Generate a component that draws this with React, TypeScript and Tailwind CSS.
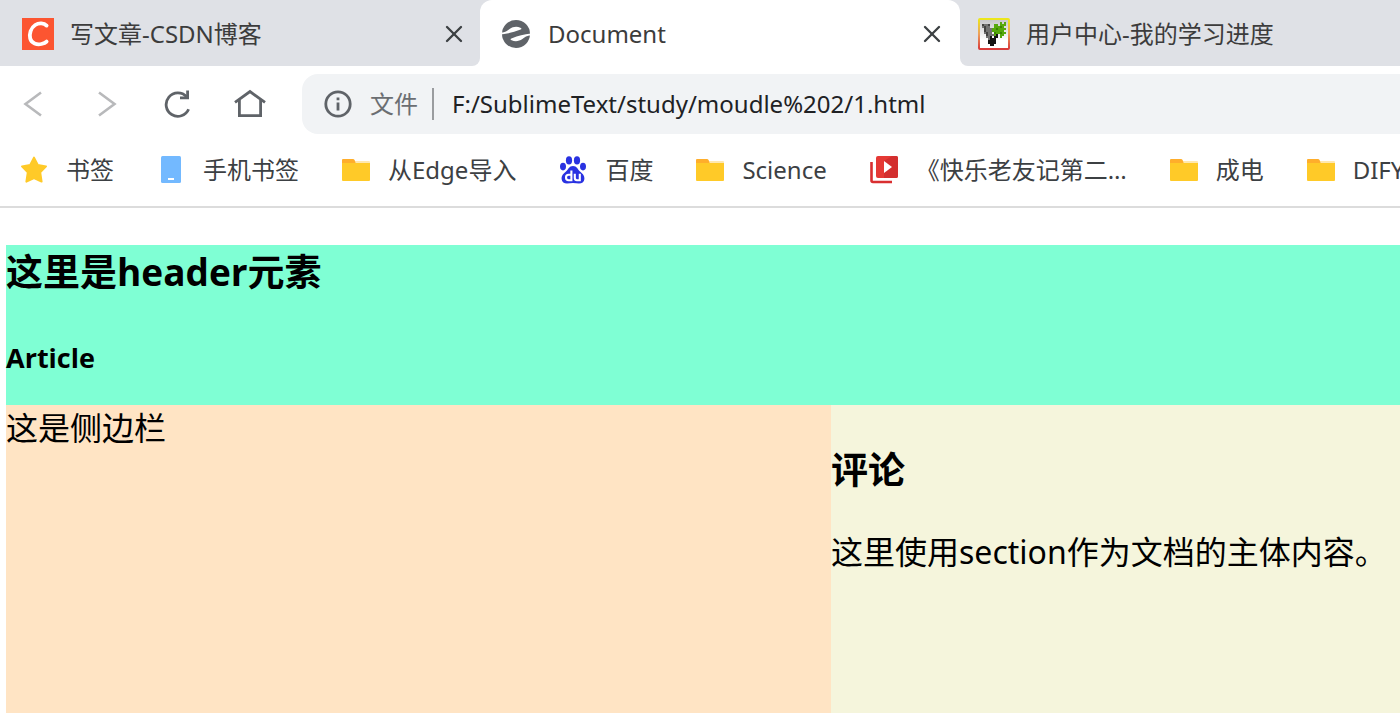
import type { ReactNode } from 'react';
import { X } from 'lucide-react';

function CsdnIcon() {
  return (
    <svg viewBox="0 0 32 32" className="size-8 shrink-0" aria-hidden="true">
      <rect width="32" height="32" fill="#fc5531" />
      <path
        d="M24.6 7.6C22 5 17 4.6 13.2 7C8.8 9.8 7 16 8.2 20.6C9.4 25.4 15 27 19.4 26C21.4 25.5 23.4 24.8 24.6 23.6"
        fill="none"
        stroke="#fff"
        strokeWidth="3.8"
        strokeLinecap="round"
      />
    </svg>
  );
}

function DocumentIcon() {
  return (
    <svg viewBox="0 0 32 32" className="size-8 shrink-0" aria-hidden="true">
      <circle cx="16" cy="16" r="14" fill="#5f6368" />
      <path d="M1 14.8C5 14.4 7.4 12.8 9.6 11C13 8.6 17 8.2 20.4 9.8C21.8 10.6 22 11 20 11.8C14 14.2 8 15.6 1 16.4Z" fill="#fff" />
      <path d="M31 17.2C27 17.6 24.6 19.2 22.4 21C19 23.4 15 23.8 11.6 22.2C10.2 21.4 10 21 12 20.2C18 17.8 24 16.4 31 15.6Z" fill="#fff" />
    </svg>
  );
}

function PlantIcon() {
  return (
    <svg viewBox="0 0 32 32" className="size-8 shrink-0" aria-hidden="true">
      <defs>
        <linearGradient id="frame" x1="0" y1="0" x2="0" y2="1">
          <stop offset="0" stopColor="#ece71c" />
          <stop offset="0.5" stopColor="#eda05c" />
          <stop offset="1" stopColor="#d93a3a" />
        </linearGradient>
        <linearGradient id="ground" x1="0" y1="0" x2="0" y2="1">
          <stop offset="0" stopColor="#c4c4c8" />
          <stop offset="0.7" stopColor="#fff" />
        </linearGradient>
      </defs>
      <rect x="1" y="1" width="30" height="30" rx="1" fill="url(#ground)" stroke="url(#frame)" strokeWidth="2" />
      <path d="M4 6H12V10H14V16H16V18H12V22H10V20H8V16H6V10H4Z" fill="#737373" />
      <path d="M4 6H6V8H4ZM6 8H8V14H10V18H8V14H6ZM10 6H12V8H10Z" fill="#424242" />
      <path d="M12 18H14V20H16V16H20V20H18V26H16V28H12V26H10V22H12Z" fill="#151515" />
      <path d="M14 10H16V6H20V8H22V4H24V6H26V4H28V8H26V10H28V12H26V14H28V16H26V18H24V20H22V16H18V18H16V14H14Z" fill="#55a80c" />
      <path d="M18 10H20V12H18ZM22 8H24V10H22ZM22 14H24V16H22ZM16 14H18V16H16Z" fill="#3b8500" />
    </svg>
  );
}

function StarIcon() {
  return (
    <svg viewBox="0 0 28 28" className="size-7 shrink-0" aria-hidden="true">
      <path
        d="M14 1.6L17.8 9L26 10.4L20.2 16.4L21.6 25.6L14 22L6.4 25.6L7.8 16.4L2 10.4L10.2 9Z"
        fill="#ffca28"
        stroke="#ffca28"
        strokeWidth="2"
        strokeLinejoin="round"
      />
    </svg>
  );
}

function PhoneIcon() {
  return (
    <svg viewBox="0 0 28 28" className="size-7 shrink-0" aria-hidden="true">
      <rect x="4" y="0" width="20" height="27" rx="1.5" fill="#73b9ff" />
      <rect x="11" y="22" width="6" height="2" fill="#fff" />
    </svg>
  );
}

function FolderIcon() {
  return (
    <svg viewBox="0 0 28 28" className="size-7 shrink-0" aria-hidden="true">
      <path d="M10 5H27Q28 5 28 6V12H10Z" fill="#ffe8b0" />
      <path d="M0 4Q0 3 1 3H11Q12 3 12.6 4L14 8H0Z" fill="#ffae2b" />
      <path d="M0 7H28V24Q28 25 27 25H1Q0 25 0 24Z" fill="#ffca28" />
    </svg>
  );
}

function BaiduIcon() {
  return (
    <svg viewBox="0 0 28 28" className="size-7 shrink-0" aria-hidden="true">
      <g fill="#2932e1">
        <ellipse cx="10" cy="4.4" rx="3.1" ry="4.1" />
        <ellipse cx="18" cy="4.4" rx="3.1" ry="4.1" />
        <ellipse cx="4" cy="10.6" rx="3" ry="3.8" />
        <ellipse cx="24" cy="10.6" rx="3" ry="3.8" />
        <path d="M14 10C17.8 10 19 13.6 21 15.6C23.2 17.6 25.6 19.4 25.4 23C25.2 26 22.8 27.6 20 27.6C18 27.6 16 27 14 27C12 27 10 27.6 8 27.6C5.2 27.6 2.8 26 2.6 23C2.4 19.4 4.8 17.6 7 15.6C9 13.6 10.2 10 14 10Z" />
      </g>
      <path
        d="M12.4 14.6V24.2H9.6Q7 24.2 7 21.5Q7 18.8 9.6 18.8H12.4M15.8 17.8V22Q15.8 24.2 18 24.2H20.8V17.8"
        fill="none"
        stroke="#fff"
        strokeWidth="2.1"
      />
    </svg>
  );
}

function VideoIcon() {
  return (
    <svg viewBox="0 0 28 28" className="size-7 shrink-0" aria-hidden="true">
      <path d="M1.5 6V24.6Q1.5 26 3 26H22" fill="none" stroke="#d92f30" strokeWidth="2.6" />
      <rect x="6" y="0" width="22" height="22" rx="2" fill="#e53935" />
      <path d="M14 5L22 0H26Q28 0 28 2V20Q28 22 26 22H14Z" fill="#d32f2f" />
      <path d="M14 5L22 11L14 17Z" fill="#fff" />
    </svg>
  );
}

const bookmarks: { label: string; icon: ReactNode }[] = [
  { label: '书签', icon: <StarIcon /> },
  { label: '手机书签', icon: <PhoneIcon /> },
  { label: '从Edge导入', icon: <FolderIcon /> },
  { label: '百度', icon: <BaiduIcon /> },
  { label: 'Science', icon: <FolderIcon /> },
  { label: '《快乐老友记第二…', icon: <VideoIcon /> },
  { label: '成电', icon: <FolderIcon /> },
  { label: 'DIFY', icon: <FolderIcon /> },
];

function CloseButton({ label }: { label: string }) {
  return (
    <button type="button" aria-label={label} className="ml-auto shrink-0 text-[#3c4043]">
      <X className="size-7" strokeWidth={2} />
    </button>
  );
}

function TabStrip() {
  return (
    <div className="flex h-[66px] overflow-hidden bg-[#dfe1e6] pl-0.5 text-2xl text-[#3c3c3c]">
      <div className="flex w-[478px] shrink-0 items-center gap-4 pt-0.5 pr-3 pl-5">
        <CsdnIcon />
        <span className="truncate">写文章-CSDN博客</span>
        <CloseButton label="Close 写文章" />
      </div>
      <div className="relative flex w-[480px] shrink-0 items-center gap-4 rounded-t-xl bg-white pt-0.5 pr-3.5 pl-5">
        <span className="absolute bottom-0 -left-2 size-2 bg-white">
          <span className="block size-2 rounded-br-lg bg-[#dfe1e6]" />
        </span>
        <span className="absolute -right-2 bottom-0 size-2 bg-white">
          <span className="block size-2 rounded-bl-lg bg-[#dfe1e6]" />
        </span>
        <DocumentIcon />
        <span className="truncate">Document</span>
        <CloseButton label="Close Document" />
      </div>
      <div className="flex shrink-0 items-center gap-4 pt-0.5 pl-[18px]">
        <PlantIcon />
        <span className="whitespace-nowrap">用户中心-我的学习进度</span>
      </div>
    </div>
  );
}

function Toolbar() {
  return (
    <div className="flex items-center gap-[38px] pt-2 pl-5">
      <div className="flex shrink-0 items-center gap-11 text-[#5f6368]">
        <button type="button" aria-label="Back" className="text-[#b8b9bb]">
          <svg viewBox="0 0 28 28" className="size-7" fill="none" stroke="currentColor" strokeWidth="2.6">
            <path d="M21 2.5L5.5 14L21 25.5" />
          </svg>
        </button>
        <button type="button" aria-label="Forward" className="text-[#b8b9bb]">
          <svg viewBox="0 0 28 28" className="size-7" fill="none" stroke="currentColor" strokeWidth="2.6">
            <path d="M7 2.5L22.5 14L7 25.5" />
          </svg>
        </button>
        <button type="button" aria-label="Reload">
          <svg viewBox="0 0 28 28" className="size-7" fill="none" stroke="currentColor" strokeWidth="2.8">
            <path d="M24.6 19.2A11.7 11.7 0 1 1 22.6 6.8" />
            <path d="M23.6 0.5V7.8H16" />
          </svg>
        </button>
        <button type="button" aria-label="Home">
          <svg viewBox="0 0 28 28" className="size-7 overflow-visible" fill="none" stroke="currentColor" strokeWidth="2.8">
            <path d="M-1 12.4L14 1.6L29 12.4" />
            <path d="M3.4 10V25.6H24.6V10" />
          </svg>
        </button>
      </div>
      <div className="flex h-[60px] min-w-0 flex-1 items-center rounded-l-2xl bg-[#f1f3f5] pl-[22px] text-2xl">
        <svg viewBox="0 0 28 28" className="size-7 shrink-0" aria-hidden="true">
          <circle cx="14" cy="14" r="12.2" fill="none" stroke="#5f6368" strokeWidth="2.8" />
          <path d="M12.6 7.5H15.4V10.3H12.6ZM12.6 12.4H15.4V20.6H12.6Z" fill="#5f6368" />
        </svg>
        <span className="ml-[18px] shrink-0 text-[#6b6e72]">文件</span>
        <span className="mx-[14px] h-8 w-0.5 shrink-0 bg-[#9a9c9f]" />
        <input
          type="text"
          aria-label="Address"
          defaultValue="F:/SublimeText/study/moudle%202/1.html"
          className="min-w-0 flex-1 bg-transparent pl-1 text-[#202124] outline-none"
        />
      </div>
    </div>
  );
}

function BookmarkBar() {
  return (
    <nav className="flex h-[74px] items-center gap-[43px] overflow-hidden border-b-2 border-[#dcdcdc] pl-5 text-2xl text-[#3c4043]">
      {bookmarks.map(({ label, icon }) => (
        <a key={label} href="#" className="flex shrink-0 items-center gap-[18px] whitespace-nowrap">
          {icon}
          {label}
        </a>
      ))}
    </nav>
  );
}

export default function App() {
  return (
    <div className="flex min-h-screen flex-col bg-white font-['Noto_Sans','Noto_Sans_CJK_SC',sans-serif]">
      <TabStrip />
      <Toolbar />
      <BookmarkBar />
      <main className="flex flex-1 flex-col pt-[37px] pl-1.5 text-[32px] text-black">
        <header className="bg-[#7fffd4] pb-[26px]">
          <h2 className="font-['Open_Sans','Noto_Sans_CJK_SC',sans-serif] text-[37px] leading-[54px] font-bold">
            这里是header元素
          </h2>
          <h4 className="pt-[38px] font-['Open_Sans',sans-serif] text-[27px] leading-[42px] font-bold">Article</h4>
        </header>
        <div className="grid flex-1 grid-cols-[29fr_20fr]">
          <aside className="bg-[#ffe4c4] leading-[46px]">这是侧边栏</aside>
          <section className="min-w-0 bg-[#f5f5dc] pt-[38px]">
            <h2 className="text-[37px] leading-[54px] font-bold">评论</h2>
            <p className="pt-8 leading-[46px]">这里使用section作为文档的主体内容。</p>
          </section>
        </div>
      </main>
    </div>
  );
}
